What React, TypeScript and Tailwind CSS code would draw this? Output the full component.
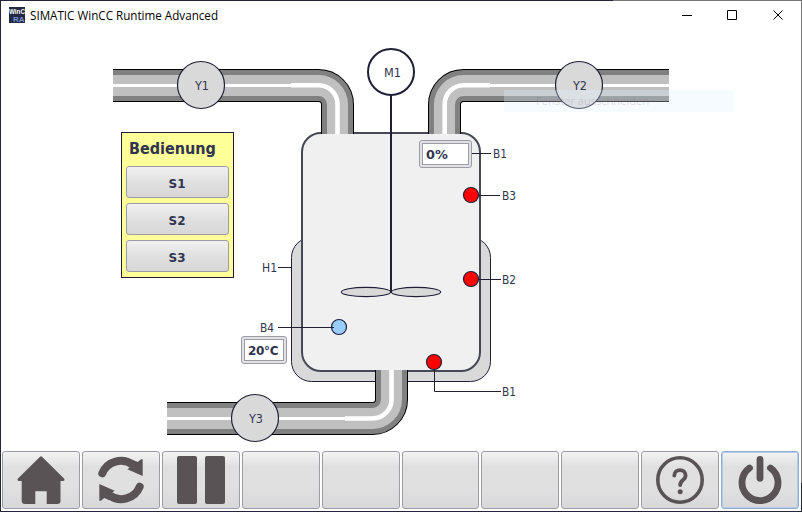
import React from "react";

const INK = "#1f2037";
const ICON = "#5a5355";

const font = '"DejaVu Sans Condensed", "DejaVu Sans", sans-serif';

type PipeProps = { d: string; bend: string };

function Pipe({ d, bend }: PipeProps) {
  return (
    <g fill="none">
      <path d={d} stroke="#000" strokeWidth="33" />
      <path d={d} stroke="#808080" strokeWidth="31" />
      <path d={d} stroke="#c0c0c0" strokeWidth="21" />
      <path d={d} stroke="#fff" strokeWidth="3" />
      <path d={bend} stroke="#fff" strokeWidth="4.6" />
    </g>
  );
}

function Valve({ cx, cy, label }: { cx: number; cy: number; label: string }) {
  return (
    <g>
      <circle cx={cx} cy={cy} r="23.5" fill="#d9d9d9" stroke={INK} strokeWidth="1.2" />
      <Label x={cx - 6} y={cy + 5} w={14} text={label} />
    </g>
  );
}

function Label({ x, y, w, text }: { x: number; y: number; w: number; text: string }) {
  return (
    <text x={x} y={y} textLength={w} lengthAdjust="spacingAndGlyphs" fontSize="12.6" fill="#31344f">
      {text}
    </text>
  );
}

function Sensor({ cx, cy, fill }: { cx: number; cy: number; fill: string }) {
  return <circle cx={cx} cy={cy} r="7.5" fill={fill} stroke={INK} strokeWidth="1.2" />;
}

function Plant() {
  return (
    <svg className="block" width="800" height="420" viewBox="1 30 800 420" style={{ fontFamily: font }}>
      <rect x="291.5" y="237.5" width="199" height="144" rx="20" fill="#d9d9d9" stroke={INK} />
      <rect x="302" y="133" width="178" height="238" rx="19" fill="#f0f0f0" stroke="#474857" strokeWidth="2" />
      <Pipe d="M113 85.5H318.5A19 19 0 0 1 337.5 104.5V134" bend="M291 85.2H318.5A19 19 0 0 1 337.5 104.5V134" />
      <Pipe d="M669 85.5H463.5A19 19 0 0 0 444.5 104.5V134" bend="M490 85.2H463.5A19 19 0 0 0 444.7 104.5V134" />
      <Pipe d="M167 418.5H372.5A19 19 0 0 0 391.5 399.5V370" bend="M345 418.5H372.5A19 19 0 0 0 391.5 399.5V370" />
      <Valve cx={201} cy={85} label="Y1" />
      <Valve cx={579} cy={85} label="Y2" />
      <Valve cx={255} cy={418} label="Y3" />
      <circle cx="391" cy="72" r="23" fill="#fff" stroke={INK} strokeWidth="2" />
      <Label x={384} y={77} w={17} text="M1" />
      <g fill="#d9d9d9" stroke={INK} strokeWidth="1.1">
        <ellipse cx="366" cy="292" rx="24.7" ry="4.6" />
        <ellipse cx="416" cy="292" rx="24.7" ry="4.6" />
      </g>
      <path d="M391 95V293" stroke={INK} strokeWidth="2" />
      <Sensor cx={339} cy={327} fill="#99ccff" />
      <path
        d="M472 153.5H491M479 195.5H500M479 279.5H501M278 267.5H291M278 327.5H334M434.5 369V391.5H501"
        fill="none"
        stroke={INK}
      />
      <Sensor cx={471} cy={195} fill="#ff0000" />
      <Sensor cx={471} cy={279} fill="#ff0000" />
      <Sensor cx={434} cy={362} fill="#ff0000" />
      <Label x={493} y={158} w={14} text="B1" />
      <Label x={502} y={200} w={14} text="B3" />
      <Label x={502} y={284} w={14} text="B2" />
      <Label x={502} y={396} w={14} text="B1" />
      <Label x={262} y={272} w={15} text="H1" />
      <Label x={260} y={332} w={14} text="B4" />
    </svg>
  );
}

function Readout({ value, className }: { value: string; className: string }) {
  return (
    <div className={`absolute h-7 rounded-[3px] border border-[#9c9baa] bg-[#e1e1e4] p-0.5 ${className}`}>
      <div className="flex h-[22px] items-center border border-[#9c9baa] bg-white pl-[3px] pt-0.5 font-['DejaVu_Sans'] font-bold text-[#31344f]">
        {value}
      </div>
    </div>
  );
}

function Panel() {
  return (
    <div className="absolute left-[120px] top-[102px] flex h-[146px] w-[113px] flex-col border border-[#1f2037] bg-[#ffff99] px-1">
      <div className="h-[33px] pl-[3px] pt-[5px] text-[16px] leading-[22px] font-bold text-[#31344f]">Bedienung</div>
      <div className="flex flex-col gap-[5px]">
        {["S1", "S2", "S3"].map((name) => (
          <button
            key={name}
            className="h-8 rounded-[3px] border border-[#9c9baa] bg-linear-to-b from-[#f2f2f2] via-[#e0e0e0] to-[#d7d7d7] pt-[3px] pr-px font-['DejaVu_Sans'] text-[12px] leading-4 font-bold text-[#31344f]"
          >
            {name}
          </button>
        ))}
      </div>
    </div>
  );
}

function TurnArrow() {
  return (
    <>
      <path d="M20.300 22.300A20 20 0 0 1 51 14" fill="none" stroke={ICON} strokeWidth="8" strokeLinecap="round" />
      <path d="M60.700 8.300V25L45.300 18.300 48.500 16 51 9 55.800 11 59 8.300Z" fill={ICON} />
    </>
  );
}

const icons: (React.ReactNode | null)[] = [
  <path d="M38 5.800Q39 4.800 40 5.800L62.500 28Q63 30 61 30H58.500V50Q58.500 53 55.500 53H44.700V40.300H33.300V53H23Q19.700 53 19.700 50V30H17Q15 30 15.500 28Z" fill={ICON} />,
  <g>
    <TurnArrow />
    <g transform="rotate(180 39 29)">
      <TurnArrow />
    </g>
  </g>,
  <g fill={ICON}>
    <rect x="15" y="5" width="20" height="48" rx="2" />
    <rect x="43" y="5" width="20" height="48" rx="2" />
  </g>,
  null,
  null,
  null,
  null,
  null,
  <g fill="none" stroke={ICON} strokeLinecap="round">
    <circle cx="39" cy="29" r="22.200" strokeWidth="3.600" />
    <path d="M33.300 24.500C33.300 17.300 44.600 17.300 44.600 24.500C44.600 29.500 39.200 28.500 39.200 34" strokeWidth="3.900" />
    <circle cx="39.200" cy="40.700" r="2.500" fill={ICON} stroke="none" />
  </g>,
  <g fill="none" stroke={ICON} strokeLinecap="round" strokeWidth="6.800">
    <path d="M39 8.500V27.300" />
    <path d="M28.500 17A18 18 0 1 0 49.500 17" />
  </g>,
];

function Toolbar() {
  return (
    <div className="grid h-[61px] grid-cols-10 gap-0.5 pt-px pr-0.5 pb-0.5 pl-px">
      {icons.map((icon, i) => (
        <button
          key={i}
          className={`flex items-center justify-center overflow-hidden rounded-[3px] border bg-[linear-gradient(180deg,#f3f3f3_0%,#e0e0e0_27%,#e0e0e0_68%,#d8d7d9_100%)] ${
            i === 9 ? "border-[#8fabd0] ring-1 ring-inset ring-[#b5cbe8]" : "border-[#9c9baa]"
          }`}
        >
          {icon && (
            <svg className="shrink-0" width="78" height="58" viewBox="0 0 78 58">
              {icon}
            </svg>
          )}
        </button>
      ))}
    </div>
  );
}

function TitleBar() {
  return (
    <div className="flex h-[29px] items-center pb-px pl-2 text-black">
      <svg width="16" height="16" viewBox="0 0 16 16" style={{ fontFamily: '"Liberation Sans", sans-serif' }}>
        <rect width="16" height="16" fill="#222b40" />
        <text x="0" y="6.500" fontSize="7" fontWeight="700" fill="#fff" textLength="16" lengthAdjust="spacingAndGlyphs">WinC</text>
        <text x="4" y="15" fontSize="7" fontWeight="700" fill="#7893d5" textLength="11.500" lengthAdjust="spacingAndGlyphs">RA</text>
      </svg>
      <svg className="ml-[5px]" width="200" height="20" style={{ fontFamily: '"Open Sans", sans-serif' }}>
        <text x="0" y="15" fontSize="12" textLength="188" lengthAdjust="spacingAndGlyphs">SIMATIC WinCC Runtime Advanced</text>
      </svg>
      <svg className="mr-[17px] ml-auto" width="102" height="12" viewBox="0 0 102 12" fill="none" stroke="#000">
        <path d="M0 6.500H10M45.500 1.500H54.500V10.500H45.500ZM91.500 1.500 100.500 10.500M100.500 1.500 91.500 10.500" />
      </svg>
    </div>
  );
}

export default function App() {
  return (
    <div
      className="h-[512px] w-[802px] overflow-hidden bg-[linear-gradient(180deg,transparent_483px,#25253a_483px),linear-gradient(90deg,#25253a_613px,#777777_613px)] p-px"
      style={{ fontFamily: font }}
    >
      <div className="flex h-[510px] flex-col bg-white">
        <TitleBar />
        <div className="relative h-[420px]">
          <Plant />
          <Panel />
          <Readout value="0%" className="left-[418px] top-[110px] w-[53px] text-[12.8px]" />
          <Readout value="20°C" className="left-[240px] top-[306px] w-[46px] text-[12px] tracking-[-0.3px]" />
          <div className="absolute left-[503px] top-[60px] flex h-[22px] w-[230px] items-center bg-[#dff1ff]/30 pl-8 font-['Open_Sans'] text-[11.5px] tracking-[-0.2px] text-[#805060]/20">
            Fenster ausschneiden
          </div>
        </div>
        <Toolbar />
      </div>
    </div>
  );
}
